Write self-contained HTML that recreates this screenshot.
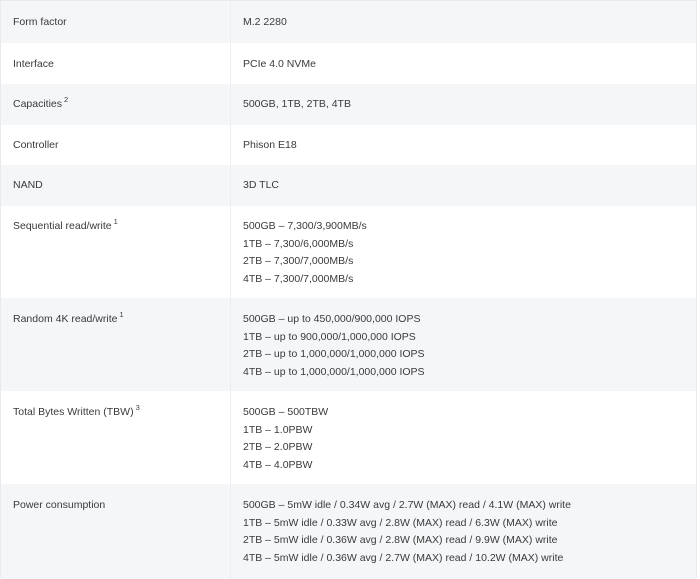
<!DOCTYPE html>
<html><head><style>
body{margin:0;background:#fff;font-family:"Liberation Sans",sans-serif;font-size:10.5px;color:#3a3a3a;}
.t{position:absolute;left:0;top:0;width:697px;height:578px;border:1px solid #e8eaed;border-bottom:none;box-sizing:border-box;}
.r{position:absolute;left:0;width:100%;}
.s{background:#f5f6f8;}
.l{position:absolute;left:12px;line-height:17.5px;}
.v{position:absolute;left:242px;line-height:17.5px;}
.d{position:absolute;left:229px;top:0;width:1px;height:578px;background:#eceef1;}
sup{font-size:7.5px;vertical-align:5px;margin-left:2px;line-height:0;}
</style></head><body>
<div class="t">
<div class="r s" style="top:0;height:42px"><div class="l" style="top:13px">Form factor</div><div class="v" style="top:13px">M.2 2280</div></div>
<div class="r" style="top:42px;height:41px"><div class="l" style="top:13px">Interface</div><div class="v" style="top:13px">PCIe 4.0 NVMe</div></div>
<div class="r s" style="top:83px;height:41px"><div class="l" style="top:12px">Capacities<sup>2</sup></div><div class="v" style="top:12px">500GB, 1TB, 2TB, 4TB</div></div>
<div class="r" style="top:124px;height:40px"><div class="l" style="top:12px">Controller</div><div class="v" style="top:12px">Phison E18</div></div>
<div class="r s" style="top:164px;height:41px"><div class="l" style="top:12px">NAND</div><div class="v" style="top:12px">3D TLC</div></div>
<div class="r" style="top:205px;height:92px"><div class="l" style="top:12px">Sequential read/write<sup>1</sup></div><div class="v" style="top:12px">500GB – 7,300/3,900MB/s<br>1TB – 7,300/6,000MB/s<br>2TB – 7,300/7,000MB/s<br>4TB – 7,300/7,000MB/s</div></div>
<div class="r s" style="top:297px;height:93px"><div class="l" style="top:13px">Random 4K read/write<sup>1</sup></div><div class="v" style="top:13px">500GB – up to 450,000/900,000 IOPS<br>1TB – up to 900,000/1,000,000 IOPS<br>2TB – up to 1,000,000/1,000,000 IOPS<br>4TB – up to 1,000,000/1,000,000 IOPS</div></div>
<div class="r" style="top:390px;height:93px"><div class="l" style="top:13px">Total Bytes Written (TBW)<sup>3</sup></div><div class="v" style="top:13px">500GB – 500TBW<br>1TB – 1.0PBW<br>2TB – 2.0PBW<br>4TB – 4.0PBW</div></div>
<div class="r s" style="top:483px;height:95px"><div class="l" style="top:13px">Power consumption</div><div class="v" style="top:13px">500GB – 5mW idle / 0.34W avg / 2.7W (MAX) read / 4.1W (MAX) write<br>1TB – 5mW idle / 0.33W avg / 2.8W (MAX) read / 6.3W (MAX) write<br>2TB – 5mW idle / 0.36W avg / 2.8W (MAX) read / 9.9W (MAX) write<br>4TB – 5mW idle / 0.36W avg / 2.7W (MAX) read / 10.2W (MAX) write</div></div>
<div class="d"></div>
</div>
</body></html>
